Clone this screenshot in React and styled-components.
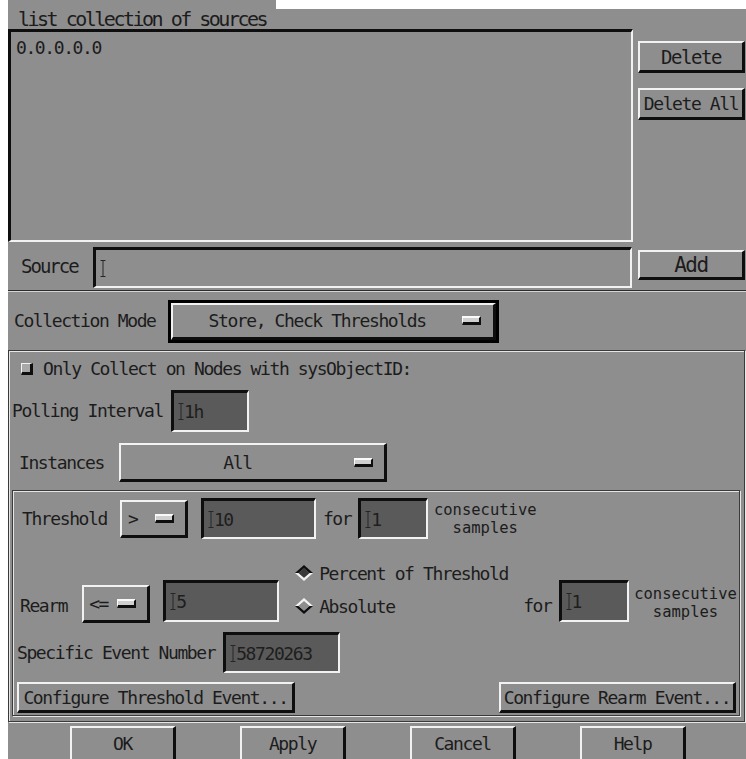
import React from 'react';
import styled, { createGlobalStyle, css } from 'styled-components';

const GlobalStyle = createGlobalStyle`
  html, body {
    margin: 0;
    padding: 0;
    background: #ffffff;
  }
`;

const raised = css`
  border-style: solid;
  border-width: 2px 3px 3px 2px;
  border-color: #f2f2f2 #0e0e0e #0e0e0e #f2f2f2;
`;

const sunken = css`
  border-style: solid;
  border-width: 3px 2px 2px 3px;
  border-color: #0e0e0e #f2f2f2 #f2f2f2 #0e0e0e;
`;

const etched = css`
  border: 1px solid #3a3a3a;
  box-shadow: inset 1px 1px 0 #e6e6e6, 1px 1px 0 #e6e6e6;
`;

const Page = styled.div`
  display: flex;
  padding-left: 8px;
  width: 738px;
`;

const Panel = styled.div`
  width: 738px;
  height: 759px;
  overflow: hidden;
  background: #8e8e8e;
  font-family: "DejaVu Sans Mono", "Liberation Mono", monospace;
  font-size: 18px;
  letter-spacing: -1.4px;
  color: #1c1c1c;
  box-sizing: border-box;

  * {
    box-sizing: border-box;
  }
`;

const TopBar = styled.div`
  display: flex;
  height: 29px;
`;

const Title = styled.div`
  width: 268px;
  padding: 8px 0 0 10px;
  font-size: 20px;
  letter-spacing: -2.5px;
  line-height: 22px;
  white-space: nowrap;
  background: #8e8e8e;
`;

const TopFill = styled.div`
  flex: 1;
  background: linear-gradient(#ffffff 0 9px, #8e8e8e 9px);
`;

const ListRow = styled.div`
  display: flex;
  height: 213px;
`;

const ListBox = styled.div`
  ${sunken};
  width: 625px;
  height: 213px;
  padding: 7px 5px;
  line-height: 18px;
`;

const SideColumn = styled.div`
  display: flex;
  flex-direction: column;
  gap: 15px;
  padding-top: 12px;
  margin-left: 5px;
`;

const PushButton = styled.div`
  ${raised};
  display: flex;
  align-items: center;
  justify-content: center;
  width: ${(p) => p.$w || 107}px;
  height: ${(p) => p.$h || 32}px;
  background: #8e8e8e;
  font-size: ${(p) => p.$size || 18}px;
  white-space: nowrap;
`;

const SourceRow = styled.div`
  display: flex;
  align-items: flex-start;
  height: 48px;
`;

const SourceLabel = styled.div`
  display: flex;
  align-items: center;
  width: 85px;
  height: 48px;
  padding-left: 13px;
  font-size: 19px;
  letter-spacing: -2px;
`;

const TextField = styled.div`
  ${sunken};
  display: flex;
  align-items: center;
  width: ${(p) => p.$w}px;
  height: ${(p) => p.$h || 41}px;
  margin-top: ${(p) => p.$top || 0}px;
  padding-left: 4px;
  background: ${(p) => (p.$dark ? '#5a5a5a' : '#8e8e8e')};
  color: #1e1e1e;
`;

const Divider = styled.div`
  height: 2px;
  border-top: 1px solid #2c2c2c;
  border-bottom: 1px solid #d4d4d4;
`;

const ModeRow = styled.div`
  display: flex;
  align-items: center;
  height: 58px;
  padding-left: 6px;
`;

const Label = styled.span`
  margin-right: ${(p) => p.$gap || 0}px;
  margin-bottom: ${(p) => p.$bottom || 0}px;
  white-space: nowrap;
  line-height: 18px;
`;

const FocusRing = styled.div`
  border: 3px solid #000000;
`;

const OptionMenu = styled.div`
  ${raised};
  display: flex;
  align-items: center;
  width: ${(p) => p.$w}px;
  height: ${(p) => p.$h}px;
  padding: 0 ${(p) => p.$pr || 12}px 0 ${(p) => p.$pl || 0}px;
  background: #8e8e8e;
`;

const OptionText = styled.span`
  flex: 1;
  text-align: ${(p) => (p.$left ? 'left' : 'center')};
  white-space: nowrap;
`;

const Indicator = styled.span`
  display: block;
  width: 19px;
  height: 9px;
  background: #d0d0d0;
  border-style: solid;
  border-width: 2px 2px 3px 1px;
  border-color: #fafafa #0e0e0e #0e0e0e #fafafa;
`;

const OuterFrame = styled.div`
  ${etched};
  width: 737px;
  height: 372px;
  padding: 1px;
`;

const CheckRow = styled.div`
  display: flex;
  align-items: center;
  gap: 10px;
  height: 34px;
  padding-left: 11px;
`;

const CheckBox = styled.span`
  display: block;
  width: 12px;
  height: 12px;
  background: #a8a8a8;
  border-style: solid;
  border-width: 1px 3px 3px 1px;
  border-color: #f2f2f2 #0e0e0e #0e0e0e #f2f2f2;
`;

const FieldRow = styled.div`
  display: flex;
  align-items: center;
  height: ${(p) => p.$h}px;
  margin-top: ${(p) => p.$top || 0}px;
  padding-left: ${(p) => p.$pl || 0}px;
`;

const InnerFrame = styled.div`
  ${etched};
  height: 226px;
  margin: 8px 3px 0 2px;
  padding: 1px;
`;

const ThresholdRow = styled.div`
  display: flex;
  align-items: center;
  height: 43px;
  margin-top: 5px;
  padding-left: 8px;
`;

const RearmRow = styled.div`
  display: flex;
  align-items: flex-end;
  height: 67px;
  margin-top: 18px;
  padding: 0 0 2px 6px;
`;

const Spacer = styled.span`
  display: block;
  width: ${(p) => p.$w}px;
  flex-shrink: 0;
`;

const Samples = styled.div`
  display: flex;
  flex-direction: column;
  align-items: center;
  width: 104px;
  margin-bottom: ${(p) => p.$bottom || 0}px;
  font-size: 15.5px;
  letter-spacing: 0;
  line-height: 18px;
  white-space: nowrap;
`;

const RadioGroup = styled.div`
  display: flex;
  flex-direction: column;
  gap: 15px;
  width: 215px;
  margin-bottom: 8px;
`;

const RadioItem = styled.div`
  display: flex;
  align-items: center;
  gap: 6px;
  height: 18px;
  white-space: nowrap;
`;

const ConfigRow = styled.div`
  display: flex;
  justify-content: space-between;
  margin-top: 9px;
  padding: 0 2px 0 3px;
`;

const BottomBar = styled.div`
  display: flex;
  gap: 64px;
  padding: 4px 0 0 62px;
`;

function Caret() {
  return (
    <svg width="6" height="17" viewBox="0 0 6 17" style={{ flexShrink: 0 }}>
      <path d="M0.5 0.5h5M3 0.5v16M0.5 16.5h5" stroke="#262626" strokeWidth="1" fill="none" />
    </svg>
  );
}

function Radio({ on }) {
  const top = on ? '#0e0e0e' : '#f2f2f2';
  const bottom = on ? '#f2f2f2' : '#0e0e0e';
  return (
    <svg width="18" height="16" viewBox="0 0 18 16">
      <polygon points="0,8 9,0 18,8 14.5,8 9,3.2 3.5,8" fill={top} />
      <polygon points="0,8 9,16 18,8 14.5,8 9,12.8 3.5,8" fill={bottom} />
      <polygon points="3.5,8 9,3.2 14.5,8 9,12.8" fill={on ? '#3a3a3a' : '#8e8e8e'} />
    </svg>
  );
}

function Input({ value, w, h, top, dark }) {
  return (
    <TextField $w={w} $h={h} $top={top} $dark={dark}>
      <Caret />
      <span>{value}</span>
    </TextField>
  );
}

export default function App() {
  return (
    <Page>
      <GlobalStyle />
      <Panel>
        <TopBar>
          <Title>list collection of sources</Title>
          <TopFill />
        </TopBar>

        <ListRow>
          <ListBox>0.0.0.0.0</ListBox>
          <SideColumn>
            <PushButton $size={19}>Delete</PushButton>
            <PushButton>Delete All</PushButton>
          </SideColumn>
        </ListRow>

        <SourceRow>
          <SourceLabel>Source</SourceLabel>
          <Input w={539} h={41} top={5} />
          <Spacer $w={6} />
          <div style={{ marginTop: 8 }}>
            <PushButton $h={30} $size={21}>Add</PushButton>
          </div>
        </SourceRow>

        <Divider />

        <ModeRow>
          <Label $gap={12}>Collection Mode</Label>
          <FocusRing>
            <OptionMenu $w={325} $h={37} $pr={12}>
              <OptionText>Store, Check Thresholds</OptionText>
              <Indicator />
            </OptionMenu>
          </FocusRing>
        </ModeRow>

        <OuterFrame>
          <CheckRow>
            <CheckBox />
            <Label>Only Collect on Nodes with sysObjectID:</Label>
          </CheckRow>

          <FieldRow $h={42} $top={4} $pl={2}>
            <Label $gap={8}>Polling Interval</Label>
            <Input value="1h" w={78} h={42} dark />
          </FieldRow>

          <FieldRow $h={39} $top={11} $pl={9}>
            <Label $gap={15}>Instances</Label>
            <OptionMenu $w={268} $h={39} $pr={11}>
              <OptionText>All</OptionText>
              <Indicator />
            </OptionMenu>
          </FieldRow>

          <InnerFrame>
            <ThresholdRow>
              <Label $gap={13}>Threshold</Label>
              <OptionMenu $w={68} $h={38} $pl={6} $pr={11}>
                <OptionText $left>&gt;</OptionText>
                <Indicator />
              </OptionMenu>
              <Spacer $w={13} />
              <Input value="10" w={115} h={41} dark />
              <Spacer $w={7} />
              <Label $gap={7}>for</Label>
              <Input value="1" w={70} h={41} dark />
              <Spacer $w={5} />
              <Samples>
                <span>consecutive</span>
                <span>samples</span>
              </Samples>
            </ThresholdRow>

            <RearmRow>
              <Label $gap={15} $bottom={8}>Rearm</Label>
              <OptionMenu $w={68} $h={38} $pl={5} $pr={11}>
                <OptionText $left>&lt;=</OptionText>
                <Indicator />
              </OptionMenu>
              <Spacer $w={13} />
              <div style={{ marginBottom: 1 }}>
                <Input value="5" w={116} h={42} dark />
              </div>
              <Spacer $w={16} />
              <RadioGroup>
                <RadioItem>
                  <Radio on />
                  <span>Percent of Threshold</span>
                </RadioItem>
                <RadioItem>
                  <Radio />
                  <span>Absolute</span>
                </RadioItem>
              </RadioGroup>
              <Spacer $w={13} />
              <Label $gap={7} $bottom={8}>for</Label>
              <div style={{ marginBottom: 1 }}>
                <Input value="1" w={70} h={42} dark />
              </div>
              <Spacer $w={5} />
              <Samples $bottom={2}>
                <span>consecutive</span>
                <span>samples</span>
              </Samples>
            </RearmRow>

            <FieldRow $h={41} $top={7} $pl={3}>
              <Label $gap={8}>Specific Event Number</Label>
              <Input value="58720263" w={117} h={41} dark />
            </FieldRow>

            <ConfigRow>
              <PushButton $w={278} $h={31}>Configure Threshold Event...</PushButton>
              <PushButton $w={237} $h={31}>Configure Rearm Event...</PushButton>
            </ConfigRow>
          </InnerFrame>
        </OuterFrame>

        <BottomBar>
          <PushButton $w={106} $h={36}>OK</PushButton>
          <PushButton $w={106} $h={36}>Apply</PushButton>
          <PushButton $w={106} $h={36}>Cancel</PushButton>
          <PushButton $w={106} $h={36}>Help</PushButton>
        </BottomBar>
      </Panel>
    </Page>
  );
}
